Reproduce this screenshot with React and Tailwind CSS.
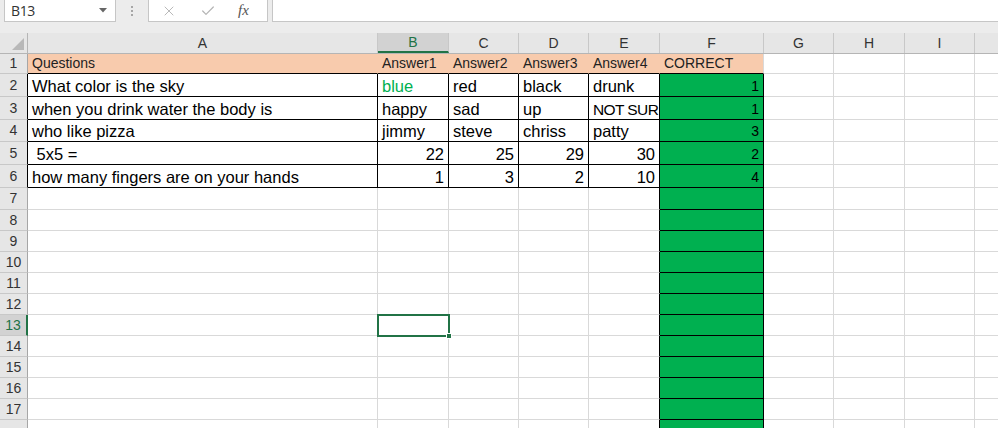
import { X, Check } from 'lucide-react';

const COLS = [
  { key: 'A', w: 'w-[350px]' },
  { key: 'B', w: 'w-[71px]' },
  { key: 'C', w: 'w-[70px]' },
  { key: 'D', w: 'w-[70px]' },
  { key: 'E', w: 'w-[71px]' },
  { key: 'F', w: 'w-[104px]' },
  { key: 'G', w: 'w-[70px]' },
  { key: 'H', w: 'w-[71px]' },
  { key: 'I', w: 'w-[70px]' },
  { key: '', w: 'w-[70px]' },
];

// row height per sheet row
const HEIGHTS = {
  1: 'h-[20px]', 2: 'h-[23px]', 3: 'h-[23px]', 4: 'h-[22px]', 5: 'h-[23px]', 6: 'h-[23px]', 7: 'h-[22px]',
};

const DATA = {
  1: ['Questions', 'Answer1', 'Answer2', 'Answer3', 'Answer4', 'CORRECT'],
  2: ['What color is the sky', 'blue', 'red', 'black', 'drunk', 1],
  3: ['when you drink water the body is', 'happy', 'sad', 'up', 'NOT SURE', 1],
  4: ['who like pizza', 'jimmy', 'steve', 'chriss', 'patty', 3],
  5: [' 5x5 =', 22, 25, 29, 30, 2],
  6: ['how many fingers are on your hands', 1, 3, 2, 10, 4],
};

const ROWS = Array.from({ length: 17 }, (_, i) => i + 1);

function cellClasses(r, c) {
  const inTable = r >= 2 && r <= 6 && c <= 4;
  let bg = 'bg-white';
  if (r === 1 && c <= 5) bg = 'bg-[#f8cbad]';
  else if (c === 5 && r >= 2) bg = 'bg-[#00b050]';

  let br = 'border-r-[#d9d9d9]';
  if (r === 1 && c <= 4) br = 'border-r-[#f8cbad]';
  else if (inTable) br = 'border-r-black';
  else if (c === 4 && r >= 7) br = 'border-r-black';
  else if (c === 5 && r >= 2) br = 'border-r-black';

  let bb = 'border-b-[#d9d9d9]';
  if (r === 1 && c <= 5) bb = 'border-b-black';
  else if (inTable) bb = 'border-b-black';
  else if (c === 5 && r >= 2) bb = 'border-b-black';

  return `${bg} ${br} ${bb}`;
}

function Cell({ r, c, col }) {
  const v = DATA[r]?.[c];
  const isNum = typeof v === 'number';
  let text = 'text-[16.5px] text-black';
  if (r === 1) text = 'text-[14px] text-[#222]';
  if (c === 5 && r >= 2) text = 'text-[14px] text-black';
  if (r === 2 && c === 1) text = 'text-[16.5px] text-[#00b050]';
  if (v === 'NOT SURE') text = 'text-[15.5px] tracking-[-0.6px] text-black';
  const selected = r === 13 && c === 1;

  return (
    <div className={`${col.w} shrink-0 relative border-r border-b ${cellClasses(r, c)}`}>
      <div
        className={`h-full flex items-end overflow-hidden whitespace-pre ${
          isNum ? 'justify-end pr-[4px]' : 'pl-[4px]'
        } ${text} leading-[19px]`}
      >
        {v !== undefined ? v : ''}
      </div>
      {selected && (
        <div className="absolute -left-px -top-px w-[73px] h-[23px] border-2 border-[#217346] z-10">
          <div className="absolute -right-[4px] -bottom-[4px] w-[6px] h-[6px] bg-[#217346] border border-white" />
        </div>
      )}
    </div>
  );
}

function FormulaBar() {
  return (
    <div className="h-[22px] flex bg-[#ececec]">
      <div className="ml-[4px] w-[112px] bg-white border-x border-b border-[#c6c6c6] flex items-center justify-between pl-[6px] pr-[8px]">
        <span className="text-[14px] text-[#333] font-['Open_Sans'] tracking-tight">B13</span>
        <svg width="8" height="5" viewBox="0 0 8 5">
          <path d="M0 0 L8 0 L4 4.5 Z" fill="#666" />
        </svg>
      </div>
      <div className="w-[32px] flex flex-col items-center justify-center gap-[2px]">
        <span className="w-[2px] h-[2px] bg-[#a6a6a6]" />
        <span className="w-[2px] h-[2px] bg-[#a6a6a6]" />
        <span className="w-[2px] h-[2px] bg-[#a6a6a6]" />
      </div>
      <div className="w-[120px] bg-white border-x border-b border-[#c6c6c6] flex items-center pl-[12px]">
        <X size={16} strokeWidth={1.4} color="#b4b4b4" />
        <Check size={16} strokeWidth={1.8} color="#b4b4b4" className="ml-[23px]" />
        <span className="ml-[22px] font-['Liberation_Serif'] italic text-[15px] text-[#555]">fx</span>
      </div>
      <div className="ml-[4px] flex-1 bg-white border-l border-b border-[#c6c6c6]" />
    </div>
  );
}

export default function App() {
  return (
    <div className="w-[998px] h-[428px] overflow-hidden bg-white font-['Liberation_Sans']">
      <FormulaBar />
      <div className="h-[11px] bg-[#ececec]" />
      {/* column headers */}
      <div className="h-[21px] flex bg-[#e6e6e6] border-b border-[#b5b5b5]">
        <div className="w-[28px] shrink-0 border-r border-[#b5b5b5] relative">
          <svg className="absolute right-[3px] bottom-[3px]" width="12" height="12" viewBox="0 0 12 12">
            <path d="M12 0 L12 12 L0 12 Z" fill="#b8b8b8" />
          </svg>
        </div>
        {COLS.map((col, i) => (
          <div
            key={i}
            className={`${col.w} shrink-0 flex items-center justify-center text-[14px] border-r border-[#c8c8c8] ${
              i === 1 ? 'bg-[#d2d2d2] text-[#217346] border-b-2 border-b-[#217346]' : 'text-[#333]'
            }`}
          >
            {col.key}
          </div>
        ))}
      </div>
      {ROWS.map((r) => (
        <div key={r} className={`flex ${HEIGHTS[r] || 'h-[21px]'}`}>
          <div
            className={`w-[28px] shrink-0 flex items-center justify-center text-[14px] border-b border-b-[#c8c8c8] ${
              r === 13
                ? 'bg-[#d2d2d2] text-[#217346] border-r-2 border-r-[#217346]'
                : r >= 2 && r <= 6
                ? 'bg-[#e6e6e6] text-[#333] border-r border-r-black'
                : 'bg-[#e6e6e6] text-[#333] border-r border-r-[#a6a6a6]'
            }`}
          >
            {r}
          </div>
          {COLS.map((col, c) => (
            <Cell key={c} r={r} c={c} col={col} />
          ))}
        </div>
      ))}
      {/* partly visible row 18 */}
      <div className="flex h-[21px]">
        <div className="w-[28px] shrink-0 bg-[#e6e6e6] border-r border-r-[#a6a6a6]" />
        {COLS.map((col, c) => (
          <Cell key={c} r={18} c={c} col={col} />
        ))}
      </div>
    </div>
  );
}
